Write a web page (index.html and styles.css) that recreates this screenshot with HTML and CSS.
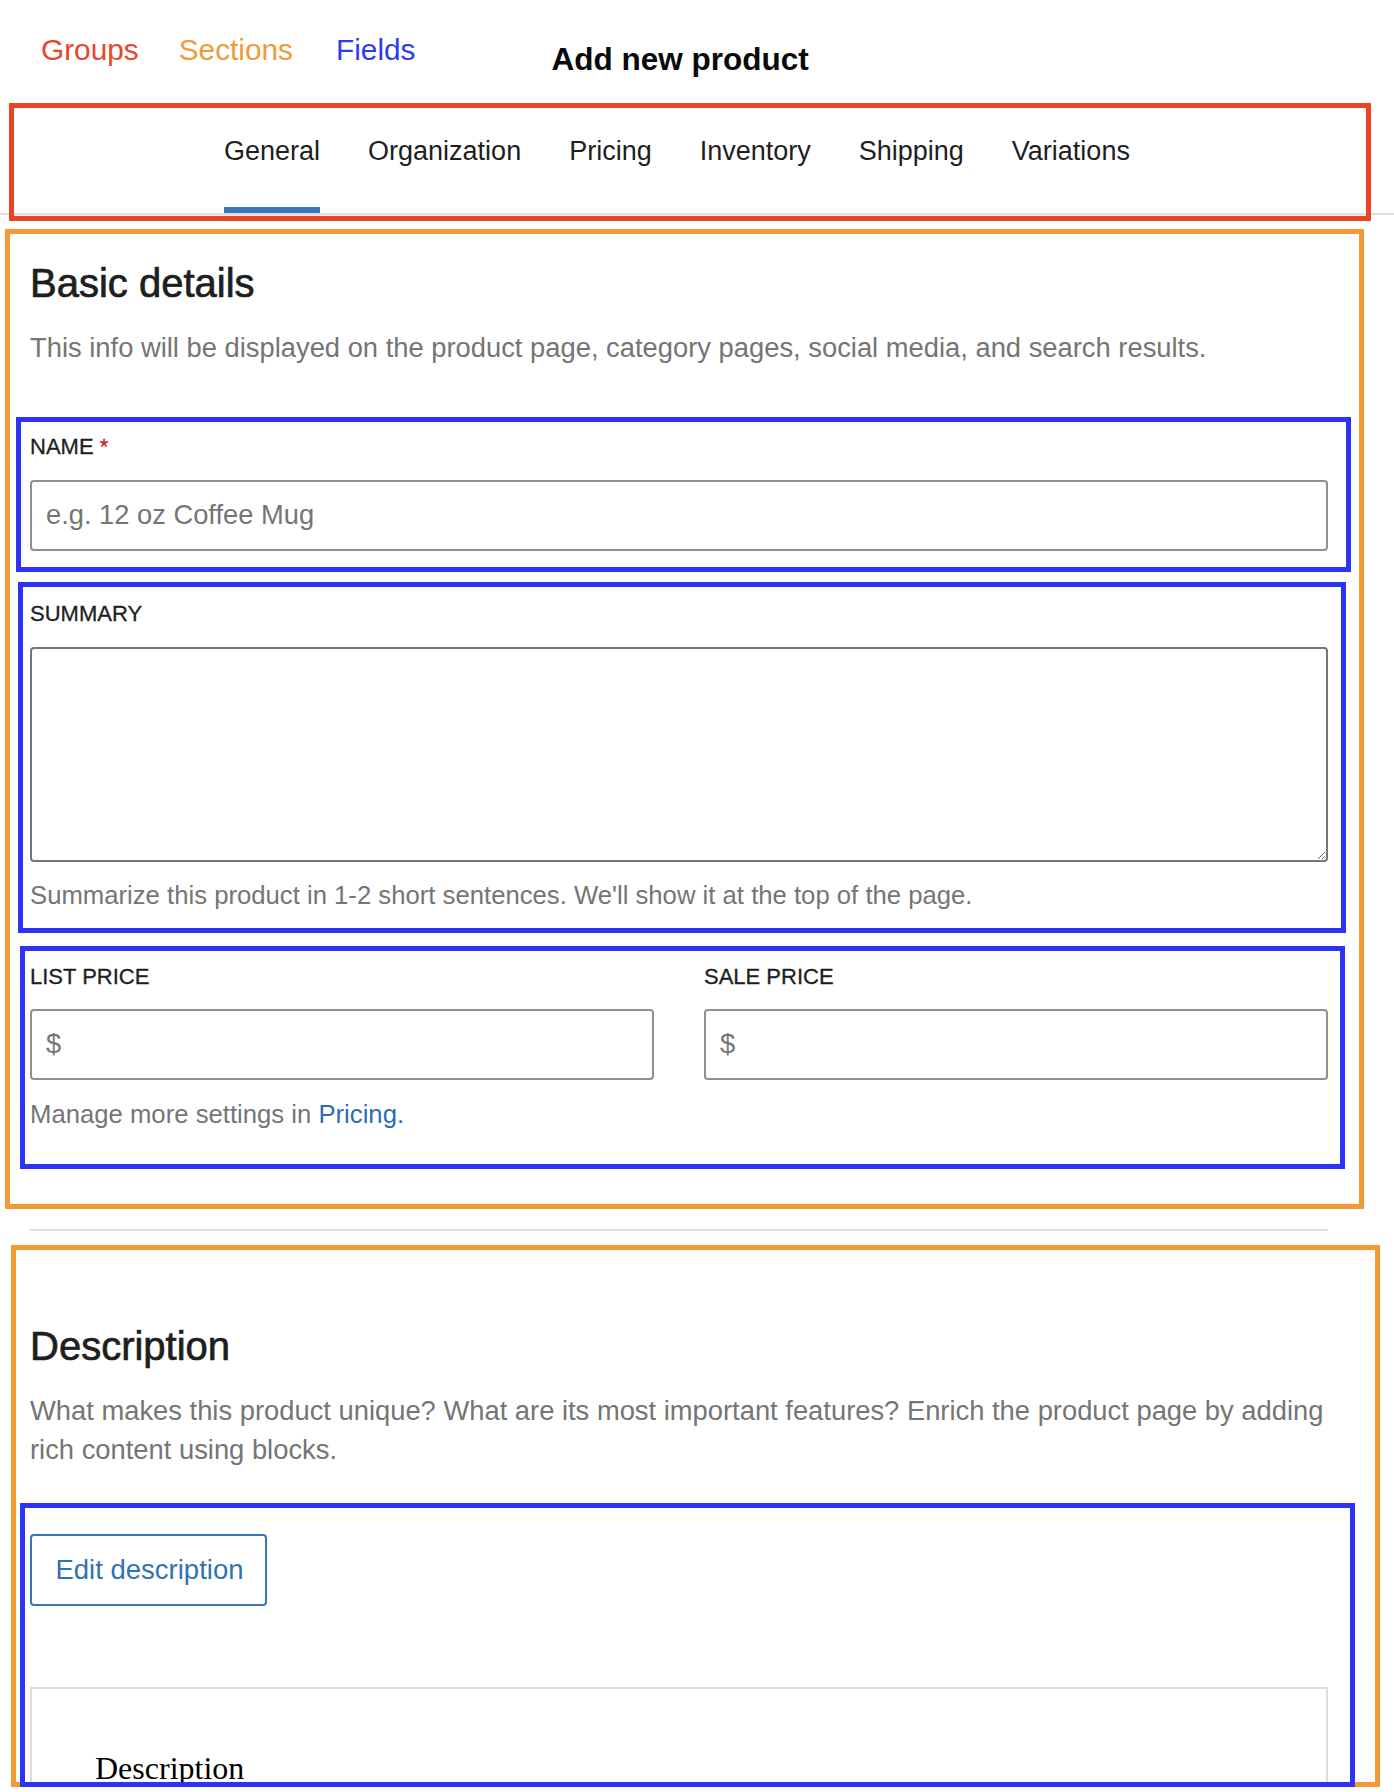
FILE: index.html
```html
<!DOCTYPE html>
<html lang="en">
<head>
<meta charset="utf-8">
<title>Add new product</title>
<link rel="stylesheet" href="styles.css">
</head>
<body>
<header class="page-header">
  <ul class="legend">
    <li class="legend-group">Groups</li>
    <li class="legend-section">Sections</li>
    <li class="legend-field">Fields</li>
  </ul>
  <h1 class="page-title">Add new product</h1>
</header>

<div class="note note-group tabs-note">
  <nav class="tabs">
    <a class="tab is-active">General</a>
    <a class="tab">Organization</a>
    <a class="tab">Pricing</a>
    <a class="tab">Inventory</a>
    <a class="tab">Shipping</a>
    <a class="tab">Variations</a>
  </nav>
</div>

<section class="note note-section section-basic">
  <h2 class="section-title">Basic details</h2>
  <p class="section-desc">This info will be displayed on the product page, category pages, social media, and search results.</p>

  <div class="note note-field field-name">
    <label class="field-label" for="product-name">Name <span class="required">*</span></label>
    <input id="product-name" class="text-input" type="text" placeholder="e.g. 12 oz Coffee Mug">
  </div>

  <div class="note note-field field-summary">
    <label class="field-label" for="product-summary">Summary</label>
    <textarea id="product-summary" class="textarea"></textarea>
    <p class="help">Summarize this product in 1-2 short sentences. We'll show it at the top of the page.</p>
  </div>

  <div class="note note-field field-price">
    <div class="price-grid">
      <div class="price-col">
        <label class="field-label" for="list-price">List price</label>
        <div class="prefix-input"><span class="prefix">$</span><input id="list-price" type="text"></div>
      </div>
      <div class="price-col">
        <label class="field-label" for="sale-price">Sale price</label>
        <div class="prefix-input"><span class="prefix">$</span><input id="sale-price" type="text"></div>
      </div>
    </div>
    <p class="help help-price">Manage more settings in <a href="#">Pricing.</a></p>
  </div>
</section>

<hr class="divider">

<section class="note note-section section-description">
  <h2 class="section-title desc-title">Description</h2>
  <p class="section-desc desc-text">What makes this product unique? What are its most important features? Enrich the product page by adding rich content using blocks.</p>

  <div class="note note-field field-editor">
    <button class="button-secondary" type="button">Edit description</button>
    <div class="preview">
      <div class="preview-heading">Description</div>
    </div>
  </div>
</section>
</body>
</html>
```

FILE: styles.css
```css
* {
  box-sizing: border-box;
}

html,
body {
  margin: 0;
  padding: 0;
  background: #ffffff;
}

body {
  font-family: "Liberation Sans", Arial, sans-serif;
  color: #1e1e1e;
}

/* ---------- header / legend ---------- */
.page-header {
  display: flex;
  align-items: flex-start;
  height: 103px;
  padding-left: 41px;
}

.legend {
  display: flex;
  gap: 40px;
  margin: 35px 0 0;
  padding: 0;
  list-style: none;
  font-size: 29.8px;
  line-height: 1;
}

.legend-group { color: #e9452b; }
.legend-section { color: #f19b38; }
.legend-field { color: #2d3bf4; margin-left: 3px; }

.page-title {
  margin: 44px 0 0 136px;
  font-size: 31.5px;
  line-height: 1;
  font-weight: 700;
  color: #0a0a0a;
}

/* ---------- annotation boxes ---------- */
.note {
  position: relative;
  padding: 5px;
}

.note::after {
  content: "";
  position: absolute;
  inset: 0;
  border: 5px solid transparent;
  pointer-events: none;
}

.note-group::after { border-color: #ea4422; z-index: 1; }
.note-section::after { border-color: #f29b36; z-index: 1; }
.note-field::after { border-color: #2c33f6; z-index: 2; }

/* ---------- tabs ---------- */
.tabs-note {
  margin-left: 9px;
  width: 1362px;
  height: 118px;
  padding: 5px 5px 6px;
}

.tabs {
  display: flex;
  gap: 48px;
  height: 107px;
  margin: 0 -28px 0 -14px;
  padding-left: 224px;
  border-bottom: 2px solid #dddddd;
}

.tab {
  padding-top: 30px;
  font-size: 27px;
  line-height: 1;
  color: #1e1e1e;
  text-decoration: none;
}

.tab.is-active {
  box-shadow: inset 0 -6px 0 #3a79b7;
}

/* ---------- sections ---------- */
.section-basic {
  margin: 8px 0 0 5px;
  width: 1359px;
  padding: 5px 5px 40px;
}

.section-title {
  margin: 29px 0 0 20px;
  font-size: 40px;
  line-height: 40px;
  font-weight: 400;
  color: #1e1e1e;
  -webkit-text-stroke: 0.7px #1e1e1e;
}

.section-desc {
  margin: 24.7px 0 0 20px;
  font-size: 27.35px;
  line-height: 39px;
  color: #757575;
}

/* ---------- fields ---------- */
.field-label {
  display: block;
  font-size: 22px;
  line-height: 22px;
  color: #1e1e1e;
  text-transform: uppercase;
  -webkit-text-stroke: 0.3px #1e1e1e;
}

.required {
  color: #cc1818;
  -webkit-text-stroke: 0.3px #cc1818;
}

.field-name {
  margin: 50px 8px 0 6px;
  padding: 19px 23px 21px 14px;
}

.text-input {
  display: block;
  width: 100%;
  height: 71px;
  margin: 22px 0 0;
  padding: 0 14px;
  border: 2px solid #8f8f8f;
  border-radius: 4px;
  background: #fff;
  font-family: inherit;
  font-size: 27.3px;
  color: #1e1e1e;
  outline: none;
}

.text-input::placeholder {
  color: #757575;
}

.field-summary {
  margin: 10px 13px 0 8px;
  padding: 21px 18px 20px 12px;
}

.textarea {
  display: block;
  width: 100%;
  height: 215px;
  margin: 22px 0 0;
  padding: 12px 14px;
  border: 2px solid #767676;
  border-radius: 4px;
  background: #fff;
  font-family: inherit;
  font-size: 27.3px;
  resize: vertical;
  outline: none;
}

.help {
  margin: 15px 0 0;
  font-size: 25.7px;
  line-height: 36px;
  color: #757575;
}

.help a {
  color: #2f6db3;
  text-decoration: none;
}

.field-price {
  margin: 13px 14px 0 10px;
  padding: 20px 17px 37px 10px;
}

.price-grid {
  display: grid;
  grid-template-columns: 1fr 1fr;
  column-gap: 50px;
}

.prefix-input {
  display: flex;
  align-items: center;
  height: 71px;
  margin-top: 21px;
  padding: 0 14px;
  border: 2px solid #8f8f8f;
  border-radius: 4px;
  background: #fff;
}

.prefix {
  font-size: 27.3px;
  color: #757575;
}

.prefix-input input {
  flex: 1;
  min-width: 0;
  border: 0;
  outline: none;
  background: transparent;
  font-family: inherit;
  font-size: 27.3px;
}

.help-price {
  margin-top: 16px;
}

/* ---------- divider ---------- */
.divider {
  width: 1298px;
  height: 2px;
  margin: 20px 0 0 30px;
  border: 0;
  background: #dedede;
}

/* ---------- description section ---------- */
.section-description {
  margin: 14px 0 0 11px;
  width: 1369px;
  height: 542px;
  padding: 5px;
}

.desc-title {
  margin: 76px 0 0 14px;
}

.desc-text {
  margin: 25px 0 0 14px;
  width: 1310px;
}

.field-editor {
  margin: 34px 20px 0 4px;
  height: 284px;
  padding: 31px 0 0 10px;
}

.button-secondary {
  display: flex;
  align-items: center;
  justify-content: center;
  width: 237px;
  height: 72px;
  padding: 0 0 0 2px;
  border: 2px solid #3577b8;
  border-radius: 4px;
  background: #fff;
  font-family: inherit;
  font-size: 27.5px;
  color: #3073b5;
}

.preview {
  width: 1298px;
  height: 105px;
  margin-top: 81px;
  padding: 63px 0 0 63px;
  border: 2px solid #dcdcdc;
  border-bottom: 0;
}

.preview-heading {
  font-family: "Liberation Serif", "Times New Roman", serif;
  font-size: 32px;
  line-height: 1;
  color: #000;
}
```
